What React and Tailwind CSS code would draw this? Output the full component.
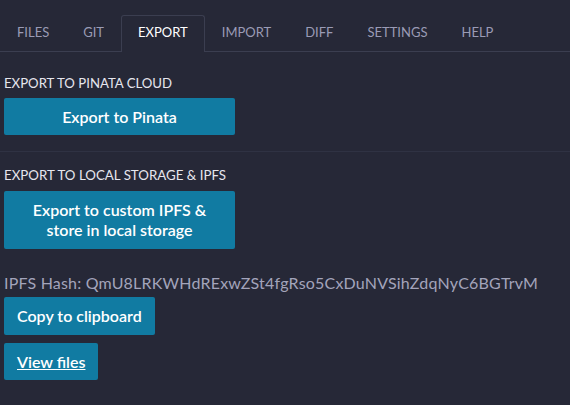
export default function App() {
  const tabs = ['FILES', 'GIT', 'EXPORT', 'IMPORT', 'DIFF', 'SETTINGS', 'HELP'];
  const active = 'EXPORT';

  return (
    <div className="min-h-[405px] w-full bg-[#262837] font-['Lato',sans-serif] text-[#e6e6ee]">
      {/* tab bar */}
      <div className="flex border-b border-[#3b3e50] pt-[15px]">
        {tabs.map((t) => (
          <div
            key={t}
            className={
              t === active
                ? 'mb-[-1px] h-[37px] rounded-t-[3px] border border-b-0 border-[#3b3e50] bg-[#262837] px-4 text-[13px] leading-[33px] text-white'
                : 'h-9 border border-transparent px-4 text-[13px] leading-[33px] text-[#9a9bb5]'
            }
          >
            {t}
          </div>
        ))}
      </div>

      {/* pinata */}
      <div className="border-b border-[#2f3243] px-1 pb-4 pt-[21px]">
        <div className="text-[13.2px] leading-5">EXPORT TO PINATA CLOUD</div>
        <button className="mt-[5px] h-[37px] w-[231px] rounded-[2px] bg-[#117ba2] text-[16px] font-semibold text-white">
          Export to Pinata
        </button>
      </div>

      {/* local storage */}
      <div className="px-1 pt-[13px]">
        <div className="text-[13.3px] leading-5">EXPORT TO LOCAL STORAGE &amp; IPFS</div>
        <button className="mt-[6px] h-[58px] w-[231px] rounded-[2px] bg-[#117ba2] px-6 text-[16px] font-semibold leading-5 text-white">
          Export to custom IPFS &amp; store in local storage
        </button>

        <div className="mt-6 text-[16px] leading-5 tracking-[0.2px] text-[#a3a4bb]">
          IPFS Hash: QmU8LRKWHdRExwZSt4fgRso5CxDuNVSihZdqNyC6BGTrvM
        </div>
        <div className="mt-[4px] flex flex-col items-start gap-2">
          <button className="h-[38px] rounded-[2px] bg-[#117ba2] px-[13px] text-[16px] font-semibold text-white">
            Copy to clipboard
          </button>
          <button className="h-[37px] rounded-[2px] bg-[#117ba2] px-[13px] text-[16px] font-semibold text-white underline">
            View files
          </button>
        </div>
      </div>
    </div>
  );
}
